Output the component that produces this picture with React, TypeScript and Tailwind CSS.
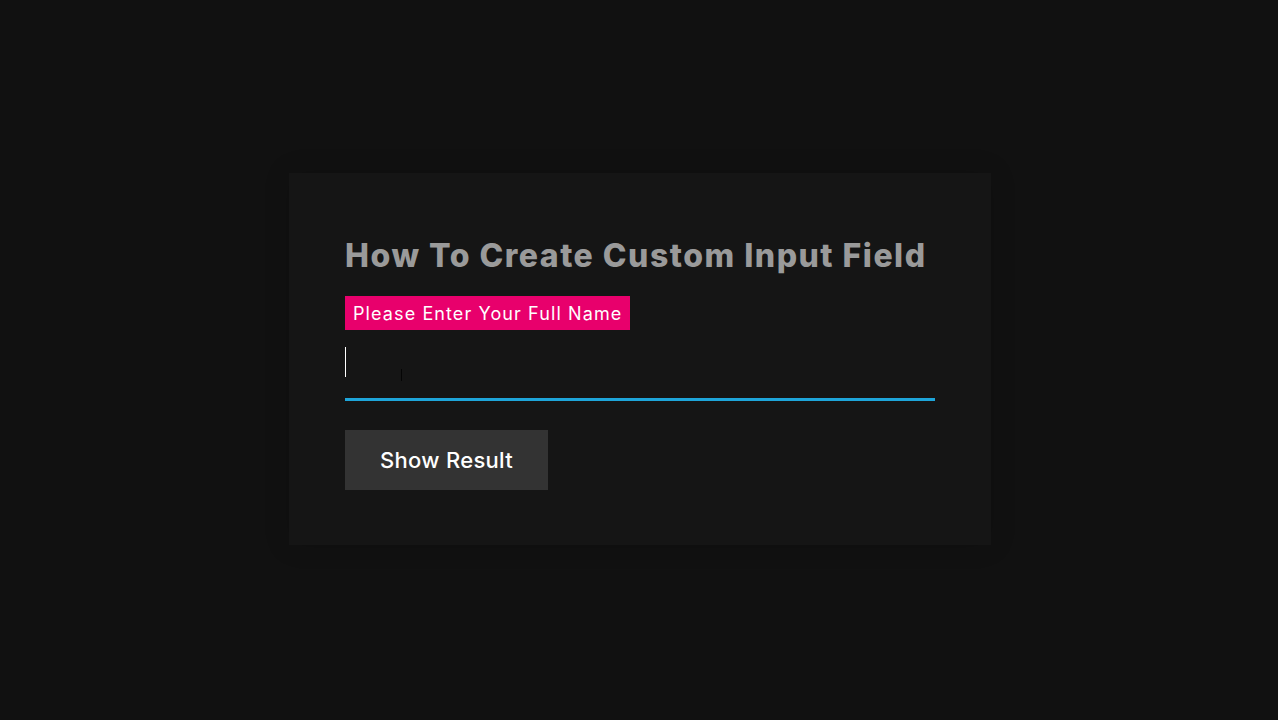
import { useState } from "react";

export default function App() {
  const [name, setName] = useState("");

  return (
    <div
      className="min-h-screen w-full bg-[#111111] flex items-start justify-center pt-[173px] pl-[2px]"
      style={{ fontFamily: "Inter, 'Open Sans', sans-serif" }}
    >
      <div className="w-[702px] bg-[#151515] px-[56px] pt-[57px] pb-[55px] shadow-[0_0_24px_rgba(0,0,0,0.15)]">
        <h1 className="text-[32px] leading-[52px] font-extrabold text-[#9a9a9a] tracking-[1.5px]">
          How To Create Custom Input Field
        </h1>

        <div className="mt-[14px] inline-flex h-[34px] items-center bg-[#e8006c] px-[8px] text-[18px] text-white tracking-[1.1px]">
          Please Enter Your Full Name
        </div>

        {/* 输入框 */}
        <div className="relative mt-[10px]">
          <input
            value={name}
            onChange={(e) => setName(e.target.value)}
            className="block h-[61px] w-full border-b-[3px] border-[#1ea5d9] bg-transparent text-[20px] text-white outline-none"
          />
          <span className="pointer-events-none absolute left-0 top-[7px] h-[30px] w-px bg-white" />
          <span className="pointer-events-none absolute left-[56px] top-[29px] h-[12px] w-px bg-[#050505]" />
        </div>

        <button className="mt-[29px] flex h-[60px] w-[203px] items-center justify-center bg-[#333333] text-[22px] font-medium text-white tracking-[0.3px]">
          Show Result
        </button>
      </div>
    </div>
  );
}
